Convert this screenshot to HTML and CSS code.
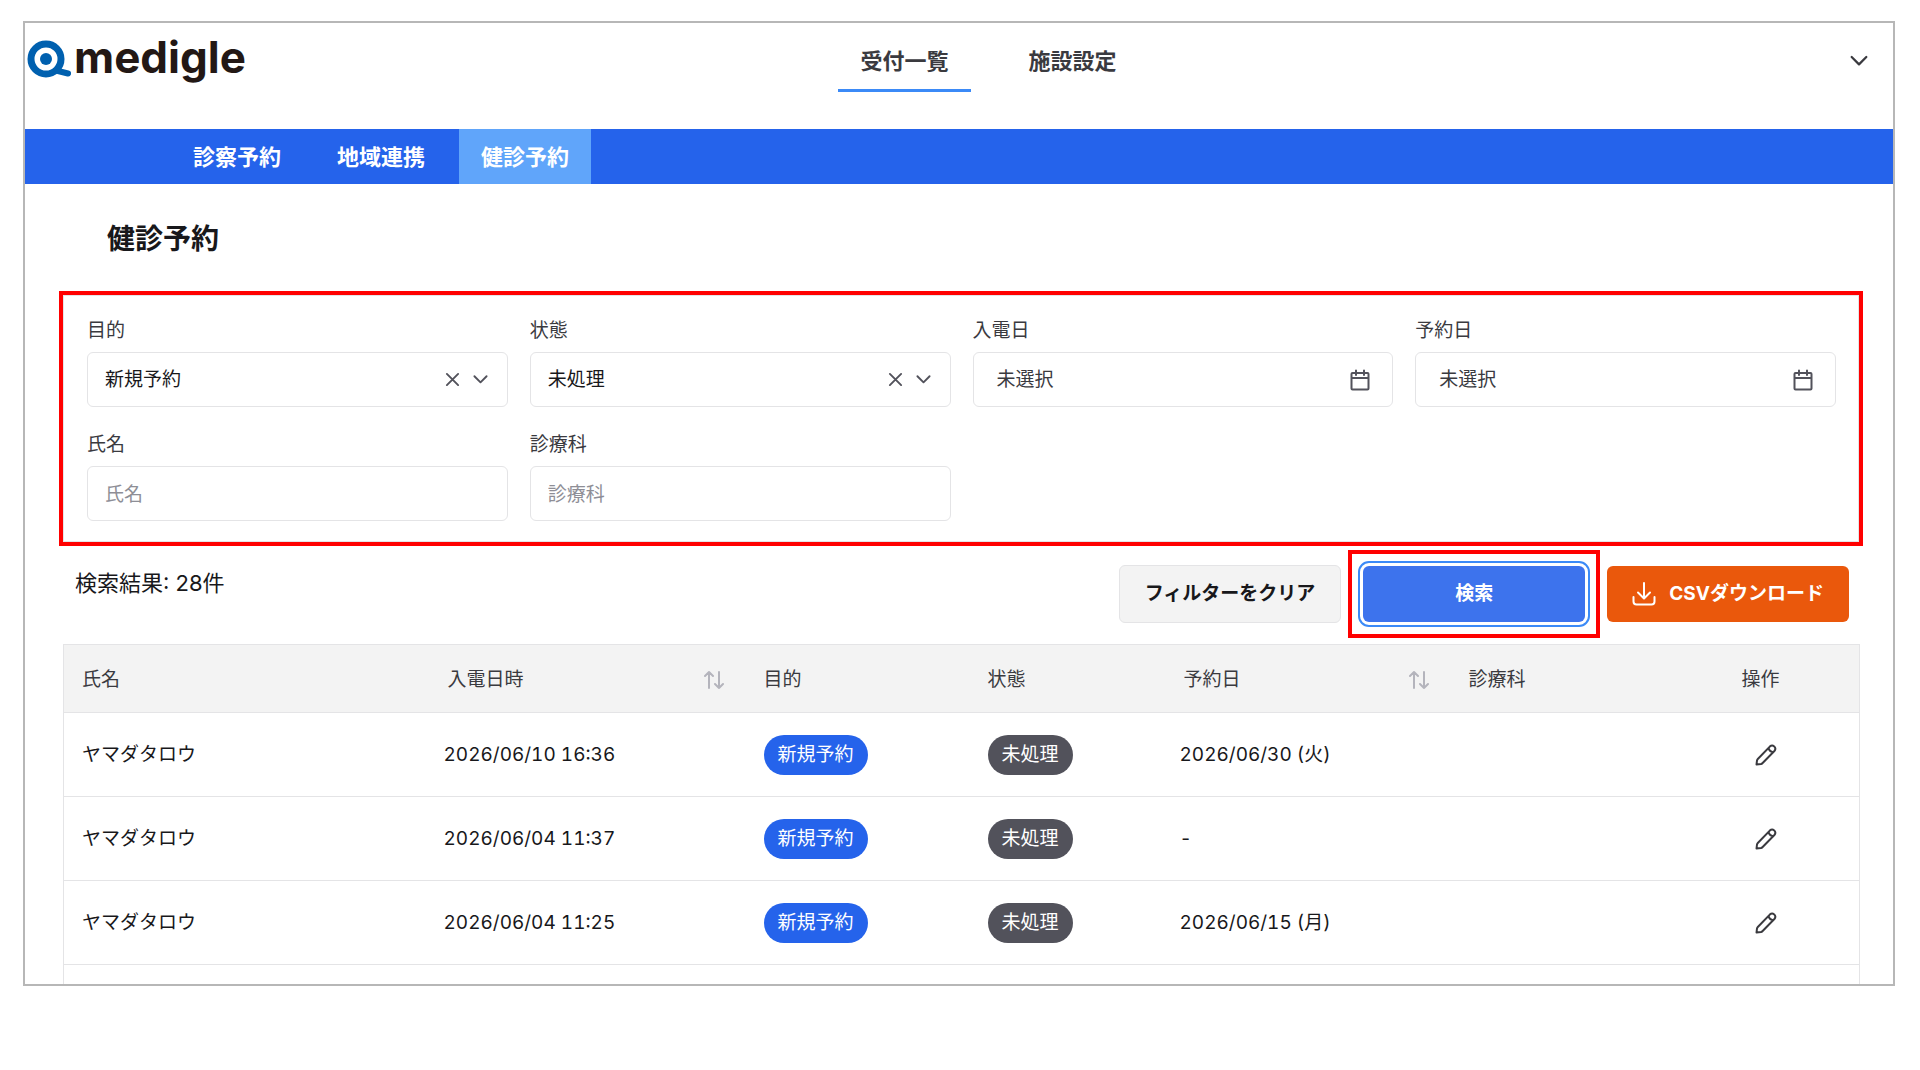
FILE: index.html
```html
<!DOCTYPE html>
<html lang="ja">
<head>
    <meta charset="UTF-8">
    <meta name="viewport" content="width=device-width, initial-scale=1.0">
    <title>健診予約</title>
    <link rel="stylesheet" href="styles.css">
</head>
<body>
    <!-- shared icons -->
    <svg class="sprite" aria-hidden="true">
        <symbol id="icon-chevron" viewBox="0 0 16 16">
            <path d="M1.5 4.5 L8 11 L14.5 4.5"/>
        </symbol>
        <symbol id="icon-close" viewBox="0 0 16 16">
            <path d="M2 2 L14 14 M14 2 L2 14"/>
        </symbol>
        <symbol id="icon-calendar" viewBox="0 0 22 22">
            <path d="M3.5 4 H18.5 Q19.5 4 19.5 5 V19.5 Q19.5 20.5 18.5 20.5 H3.5 Q2.5 20.5 2.5 19.5 V5 Q2.5 4 3.5 4 Z M2.5 9 H19.5 M7 1.5 V6 M15 1.5 V6"/>
        </symbol>
        <symbol id="icon-sort" viewBox="0 0 20 20">
            <path d="M5 18 V2 M1 6 L5 2 L9 6 M15 2 V18 M11 14 L15 18 L19 14"/>
        </symbol>
        <symbol id="icon-pencil" viewBox="0 0 22 22">
            <path d="M1.5 20.5 L2 16.5 Q2.2 15.6 2.8 15 L14.8 2.6 Q17 0.6 19.2 2.4 Q21.4 4.7 19.4 7 L7.4 19.2 Q6.8 19.8 6 20 Z M13.6 4.2 Q14.2 7.6 17.8 8.2"/>
        </symbol>
    </svg>

    <div class="frame">
        <header class="header">
            <a class="logo" href="#">
                <svg class="logo-mark" viewBox="0 0 46 40" aria-hidden="true">
                    <circle class="logo-ring" cx="19" cy="20" r="15"/>
                    <circle class="logo-dot" cx="19" cy="20" r="6"/>
                    <path class="logo-tail" d="M31 32 L41 34.5"/>
                </svg>
                <span class="logo-text">medigle</span>
            </a>
            <nav class="tabs">
                <a class="tab tab-active" href="#">受付一覧</a>
                <a class="tab" href="#">施設設定</a>
            </nav>
            <div class="account">
                <button class="account-btn" type="button" aria-label="アカウント">
                    <svg class="icon icon-sm"><use href="#icon-chevron"/></svg>
                </button>
            </div>
        </header>

        <nav class="subnav">
            <a class="subnav-item" href="#">診察予約</a>
            <a class="subnav-item" href="#">地域連携</a>
            <a class="subnav-item subnav-active" href="#">健診予約</a>
        </nav>

        <main class="main">
            <h1 class="title">健診予約</h1>

            <form class="filters" id="filters">
                <div class="field">
                    <label for="purpose">目的</label>
                    <div class="select-wrap">
                        <select class="control" id="purpose">
                            <option>新規予約</option>
                        </select>
                        <button class="clear-btn" type="button" aria-label="クリア">
                            <svg class="icon icon-xs"><use href="#icon-close"/></svg>
                        </button>
                        <svg class="icon icon-xs select-arrow"><use href="#icon-chevron"/></svg>
                    </div>
                </div>
                <div class="field">
                    <label for="status">状態</label>
                    <div class="select-wrap">
                        <select class="control" id="status">
                            <option>未処理</option>
                        </select>
                        <button class="clear-btn" type="button" aria-label="クリア">
                            <svg class="icon icon-xs"><use href="#icon-close"/></svg>
                        </button>
                        <svg class="icon icon-xs select-arrow"><use href="#icon-chevron"/></svg>
                    </div>
                </div>
                <div class="field">
                    <label for="call-date">入電日</label>
                    <button class="control date-btn" type="button" id="call-date">
                        <span>未選択</span>
                        <svg class="icon icon-md"><use href="#icon-calendar"/></svg>
                    </button>
                </div>
                <div class="field">
                    <label for="reserve-date">予約日</label>
                    <button class="control date-btn" type="button" id="reserve-date">
                        <span>未選択</span>
                        <svg class="icon icon-md"><use href="#icon-calendar"/></svg>
                    </button>
                </div>
                <div class="field">
                    <label for="name">氏名</label>
                    <input class="control" type="text" id="name" placeholder="氏名">
                </div>
                <div class="field">
                    <label for="department">診療科</label>
                    <input class="control" type="text" id="department" placeholder="診療科">
                </div>
            </form>

            <div class="toolbar">
                <p class="result-count">検索結果: 28件</p>
                <div class="actions">
                    <button class="btn btn-clear" type="reset" form="filters">フィルターをクリア</button>
                    <div class="search-highlight">
                        <button class="btn btn-search" type="button">検索</button>
                    </div>
                    <button class="btn btn-csv" type="button">
                        <svg class="icon icon-download" viewBox="0 0 24 24">
                            <path d="M12 1 V16 M6 10.5 L12 16.5 L18 10.5 M1.5 15 V19.5 Q1.5 22.5 4.5 22.5 H19.5 Q22.5 22.5 22.5 19.5 V15"/>
                        </svg>
                        CSVダウンロード
                    </button>
                </div>
            </div>

            <table class="results">
                <colgroup>
                    <col class="col-name">
                    <col class="col-call">
                    <col class="col-purpose">
                    <col class="col-status">
                    <col class="col-reserve">
                    <col class="col-department">
                    <col class="col-action">
                </colgroup>
                <thead>
                    <tr>
                        <th>氏名</th>
                        <th><button class="sort-btn" type="button">入電日時 <svg class="icon icon-sort"><use href="#icon-sort"/></svg></button></th>
                        <th>目的</th>
                        <th>状態</th>
                        <th><button class="sort-btn" type="button">予約日 <svg class="icon icon-sort"><use href="#icon-sort"/></svg></button></th>
                        <th>診療科</th>
                        <th>操作</th>
                    </tr>
                </thead>
                <tbody>
                    <tr>
                        <td>ヤマダタロウ</td>
                        <td>2026/06/10 16:36</td>
                        <td><span class="badge badge-new">新規予約</span></td>
                        <td><span class="badge badge-todo">未処理</span></td>
                        <td>2026/06/30 (火)</td>
                        <td></td>
                        <td><button class="edit-btn" type="button" aria-label="編集"><svg class="icon icon-md"><use href="#icon-pencil"/></svg></button></td>
                    </tr>
                    <tr>
                        <td>ヤマダタロウ</td>
                        <td>2026/06/04 11:37</td>
                        <td><span class="badge badge-new">新規予約</span></td>
                        <td><span class="badge badge-todo">未処理</span></td>
                        <td>-</td>
                        <td></td>
                        <td><button class="edit-btn" type="button" aria-label="編集"><svg class="icon icon-md"><use href="#icon-pencil"/></svg></button></td>
                    </tr>
                    <tr>
                        <td>ヤマダタロウ</td>
                        <td>2026/06/04 11:25</td>
                        <td><span class="badge badge-new">新規予約</span></td>
                        <td><span class="badge badge-todo">未処理</span></td>
                        <td>2026/06/15 (月)</td>
                        <td></td>
                        <td><button class="edit-btn" type="button" aria-label="編集"><svg class="icon icon-md"><use href="#icon-pencil"/></svg></button></td>
                    </tr>
                    <tr>
                        <td colspan="7"></td>
                    </tr>
                </tbody>
            </table>
        </main>
    </div>
</body>
</html>
```
FILE: styles.css
```css
:root {
    --primary: #2563eb;
    --primary-light: #60a5fa;
    --focus-ring: #3b8af7;
    --orange: #ea580c;
    --highlight: #ff0000;
    --text: #18181b;
    --text-sub: #3a3a3f;
    --icon-color: #52525b;
    --placeholder: #8e8e96;
    --border: #e4e4e6;
    --gray-bg: #f3f3f3;
}

* {
    box-sizing: border-box;
}

body {
    margin: 0;
    background-color: #fff;
    color: var(--text);
    font-family: Inter, 'Noto Sans CJK JP', sans-serif;
    font-size: 19px;
    line-height: 28px;
}

button,
input,
select {
    font: inherit;
    color: inherit;
}

button {
    padding: 0;
    border: none;
    background: none;
    cursor: pointer;
}

a {
    color: inherit;
    text-decoration: none;
}

.sprite {
    display: none;
}

.icon {
    flex-shrink: 0;
    display: block;
    fill: none;
    stroke: currentColor;
    stroke-width: 2;
    stroke-linecap: round;
    stroke-linejoin: round;
}

.icon-xs {
    width: 15px;
    height: 15px;
}

.icon-sm {
    width: 18px;
    height: 18px;
}

.icon-md {
    width: 22px;
    height: 22px;
}

.frame {
    height: calc(100vh - 105px);
    margin: 21px 25px 0 23px;
    border: 2px solid #b7b7b7;
    overflow: hidden;
}

/* header */
.header {
    display: flex;
    align-items: flex-start;
    height: 106px;
    padding-top: 7px;
}

.logo {
    flex: 1;
    display: flex;
    align-items: center;
    gap: 1px;
    height: 58px;
    padding-left: 2px;
    color: #231815;
}

.logo-mark {
    width: 46px;
    height: 40px;
}

.logo-ring {
    fill: none;
    stroke: #0060af;
    stroke-width: 7;
}

.logo-dot {
    fill: #0060af;
}

.logo-tail {
    stroke: #0060af;
    stroke-width: 6;
    stroke-linecap: round;
}

.logo-text {
    padding-bottom: 4px;
    font-size: 44px;
    font-weight: 700;
    line-height: 52px;
}

.tabs {
    display: flex;
    gap: 36px;
    margin-left: 82px;
}

.tab {
    padding: 17px 22px 14px;
    border-bottom: 3px solid transparent;
    color: var(--text-sub);
    font-size: 22px;
    font-weight: 700;
}

.tab-active {
    border-bottom-color: var(--focus-ring);
}

.account {
    flex: 1;
    display: flex;
    justify-content: flex-end;
    padding: 22px 25px 0 0;
    color: var(--text-sub);
}

.subnav {
    display: flex;
    gap: 12px;
    padding-left: 146px;
    background-color: var(--primary);
    color: #fff;
    font-size: 22px;
    font-weight: 700;
    line-height: 54px;
}

.subnav-item {
    padding: 1px 22px 0;
}

.subnav-active {
    background-color: var(--primary-light);
}

.main {
    padding: 35px 34px 0 38px;
}

.title {
    margin: 0 0 36px;
    padding-left: 44px;
    font-size: 28px;
    font-weight: 700;
    line-height: 40px;
}

/* search filters */
.filters {
    display: grid;
    grid-template-columns: repeat(4, 1fr);
    gap: 23px 22px;
    padding: 20px 22px 20px 23px;
    border: 1px solid var(--border);
    outline: 4px solid var(--highlight);
}

.field {
    display: flex;
    flex-direction: column;
    gap: 6px;
}

.field label {
    color: var(--text-sub);
    line-height: 30px;
}

.control {
    width: 100%;
    height: 55px;
    padding: 1px 17px 0;
    border: 1px solid var(--border);
    border-radius: 6px;
    background-color: #fff;
    appearance: none;
}

.control::placeholder {
    color: var(--placeholder);
    opacity: 1;
}

.select-wrap {
    position: relative;
    color: var(--icon-color);
}

.select-wrap .control {
    color: var(--text);
}

.clear-btn {
    position: absolute;
    top: 20px;
    right: 48px;
}

.select-arrow {
    position: absolute;
    top: 20px;
    right: 20px;
    pointer-events: none;
}

.date-btn {
    display: flex;
    align-items: center;
    justify-content: space-between;
    padding: 0 21px 0 23px;
    color: var(--text-sub);
}

.date-btn .icon {
    color: var(--icon-color);
}

/* toolbar */
.toolbar {
    display: flex;
    justify-content: space-between;
    align-items: flex-start;
    padding: 23px 10px 21px 12px;
}

.result-count {
    margin: 4px 0 0;
    font-size: 22px;
}

.actions {
    display: flex;
    align-items: center;
    gap: 22px;
}

.btn {
    height: 56px;
    border-radius: 6px;
    font-weight: 700;
}

.btn-clear {
    height: 58px;
    padding: 0 25px;
    border: 1px solid var(--border);
    background-color: var(--gray-bg);
}

.search-highlight {
    display: flex;
    align-items: center;
    align-self: stretch;
    outline: 4px solid var(--highlight);
    outline-offset: 11px;
}

.btn-search {
    width: 222px;
    background-color: #3d73ed;
    color: #fff;
    outline: 2px solid var(--focus-ring);
    outline-offset: 3px;
}

.btn-csv {
    display: flex;
    align-items: center;
    gap: 13px;
    padding: 0 25px;
    background-color: var(--orange);
    color: #fff;
}

.icon-download {
    width: 24px;
    height: 24px;
}

/* results */
.results {
    width: 100%;
    border: 1px solid var(--border);
    border-collapse: collapse;
    table-layout: fixed;
    font-variant-numeric: tabular-nums;
}

.col-name {
    width: 362px;
}

.col-call {
    width: 320px;
}

.col-purpose {
    width: 224px;
}

.col-status {
    width: 192px;
}

.col-reserve {
    width: 289px;
}

.col-department {
    width: 273px;
}

.col-action {
    width: 136px;
}

.results th {
    height: 68px;
    padding: 2px 18px 0;
    background-color: var(--gray-bg);
    color: var(--text-sub);
    font-weight: 400;
    text-align: left;
}

.results td {
    height: 84px;
    padding: 0 18px;
    border-top: 1px solid var(--border);
}

.sort-btn {
    display: flex;
    align-items: center;
    justify-content: space-between;
    width: 100%;
    padding: 0 4px;
}

.icon-sort {
    width: 20px;
    height: 20px;
    color: #b4b4bc;
}

.badge {
    display: inline-block;
    padding: 0 14px;
    border-radius: 20px;
    color: #fff;
    line-height: 40px;
}

.badge-new {
    background-color: var(--primary);
}

.badge-todo {
    background-color: #52525b;
}

.edit-btn {
    display: block;
    padding: 13px;
    color: var(--text-sub);
}
```
